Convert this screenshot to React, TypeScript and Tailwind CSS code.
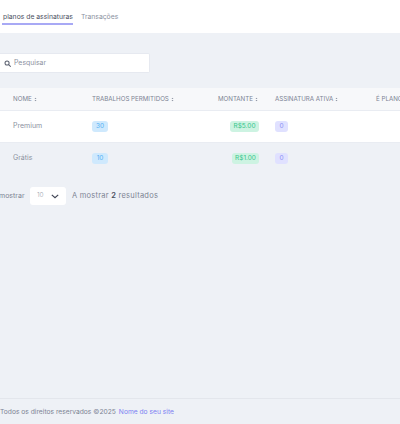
const font = "font-['Inter',sans-serif]"

function SortIcon() {
  return (
    <svg viewBox="0 0 6 8" className="ml-[2px] inline-block h-[5px] w-[3px] text-[#8b91a0]" fill="currentColor">
      <path d="M3 0.5 5 3H1zM3 7.5 1 5h4z" />
    </svg>
  )
}

function HeaderCell({ label, className = '' }: { label: string; className?: string }) {
  return (
    <div className={`whitespace-nowrap text-[6.2px] font-normal text-[#7d8494] ${className}`}>
      {label}
      <SortIcon />
    </div>
  )
}

function Badge({ text, className }: { text: string; className: string }) {
  return (
    <div className={`flex h-[11px] items-center justify-center rounded-[3px] text-[6.5px] font-normal ${className}`}>{text}</div>
  )
}

const plans = [
  { name: 'Premium', jobs: '30', amount: 'R$5.00', bg: 'bg-white', amountW: 'w-[29px]' },
  { name: 'Grátis', jobs: '10', amount: 'R$1.00', bg: 'bg-[#eef1f6]', amountW: 'w-[27px]' },
]

export default function App() {
  return (
    <div className={`flex h-[424px] w-[400px] flex-col overflow-hidden bg-[#eef1f6] font-light ${font}`}>
      <div className="flex h-[33px] shrink-0 items-start gap-[8px] bg-white pl-[2px] pt-[11px]">
        <div className="h-[14px] border-b-2 border-[#a8a9f5] pl-[1px] text-[6.8px] leading-[11px] font-normal whitespace-nowrap text-[#4a4f5e]">
          planos de assinaturas
        </div>
        <div className="text-[6.8px] leading-[11px] font-normal text-[#8b91a0]">Transações</div>
      </div>

      <div className="mt-[20px] flex h-[20px] w-[149.5px] shrink-0 items-center gap-[3px] rounded-r-[2px] border border-l-0 border-[#e6e9f0] bg-white pl-[4px]">
        <svg viewBox="0 0 24 24" className="h-[7px] w-[7px] text-[#5d6372]" fill="none" stroke="currentColor" strokeWidth="3.5" strokeLinecap="round">
          <circle cx="10.5" cy="10.5" r="7" />
          <path d="m16 16 6 6" />
        </svg>
        <span className="pt-[1px] text-[6.9px] font-normal text-[#8b91a0]">Pesquisar</span>
      </div>

      <div className="mt-[15px] grid h-[22px] shrink-0 grid-cols-[92px_125px_58px_101px_24px] items-center overflow-hidden bg-[#f7f8fa]">
        <HeaderCell label="NOME" className="pl-[13px]" />
        <HeaderCell label="TRABALHOS PERMITIDOS" />
        <HeaderCell label="MONTANTE" className="pr-[17px] text-right" />
        <HeaderCell label="ASSINATURA ATIVA" />
        <div className="whitespace-nowrap text-[6.2px] font-normal text-[#7d8494]">É PLANO</div>
      </div>

      {plans.map((p) => (
        <div
          key={p.name}
          className={`grid h-[32px] shrink-0 grid-cols-[92px_125px_42px_116px_25px] items-center border-t border-[#e9ecf2] ${p.bg}`}
        >
          <div className="pl-[13px] text-[7px] font-normal text-[#8b91a0]">{p.name}</div>
          <Badge text={p.jobs} className="w-[16px] bg-[#cfe9fd] text-[#55b1f3]" />
          <div className="flex justify-end">
            <Badge text={p.amount} className={`${p.amountW} bg-[#cdf3e2] text-[#37c58b]`} />
          </div>
          <div className="pl-[16px]">
            <Badge text="0" className="w-[13px] bg-[#e0e1ff] text-[#8c90f5]" />
          </div>
        </div>
      ))}

      <div className="mt-[13px] flex shrink-0 items-center">
        <span className="-ml-[1px] w-[31px] text-[7px] font-normal whitespace-nowrap text-[#7d8494]">mostrar</span>
        <div className="flex h-[18px] w-[36px] items-center justify-between rounded-[3px] bg-white px-[7px]">
          <span className="text-[6.5px] text-[#9aa0ad]">10</span>
          <svg viewBox="0 0 10 6" className="h-[5px] w-[8px]" fill="none" stroke="#3f4453" strokeWidth="1.5">
            <path d="m1 1 4 3.5L9 1" />
          </svg>
        </div>
        <span className="ml-[6px] text-[7.5px] font-normal tracking-[0.25px] text-[#7d8494]">
          A mostrar <b className="font-semibold text-[#4a4f5e]">2</b> resultados
        </span>
      </div>

      <div className="mt-auto flex h-[26px] shrink-0 items-center border-t border-[#e3e6ec] pt-[2px] text-[6.7px] font-normal whitespace-nowrap text-[#7d8494]">
        <span>Todos os direitos reservados ©2025</span>
        <span className="ml-[3px] text-[#7c7ff2]">Nome do seu site</span>
      </div>
    </div>
  )
}
